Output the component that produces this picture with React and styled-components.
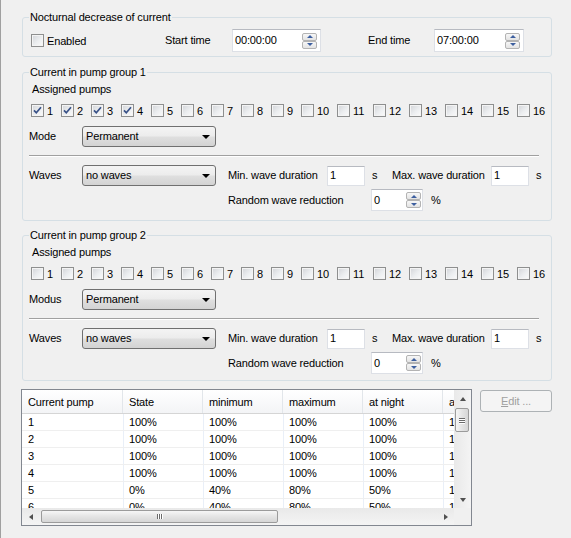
import React from 'react';
import styled, { createGlobalStyle } from 'styled-components';

const GlobalStyle = createGlobalStyle`
  html, body {
    margin: 0;
    padding: 0;
    background: #f0f0f0;
  }
  body {
    font-family: 'Liberation Sans', Arial, sans-serif;
    font-size: 11px;
    color: #000;
  }
`;

const Page = styled.div`
  width: 571px;
  height: 538px;
  box-sizing: border-box;
  border-left: 1px solid #a0a0a0;
  padding: 11px 19px 0 21px;
  background: #f0f0f0;
  letter-spacing: -0.15px;
  overflow: hidden;
`;

const Group = styled.fieldset`
  width: 530px;
  min-width: 0;
  box-sizing: border-box;
  margin: 0 0 ${(p) => p.$mb}px 0;
  padding: ${(p) => p.$pt}px 12px ${(p) => p.$pb}px 6px;
  border: 1px solid #d5dfe5;
  border-radius: 3px;
`;

const Legend = styled.legend`
  padding: 0 1px;
  margin-left: 0;
  line-height: 13px;
  font-size: 11px;
`;

const Row = styled.div`
  display: flex;
  align-items: center;
  height: ${(p) => p.$h}px;
  margin-top: ${(p) => p.$mt || 0}px;
  margin-left: ${(p) => p.$ml || 0}px;
`;

const Label = styled.span`
  flex-shrink: 0;
  width: ${(p) => (p.$w ? `${p.$w}px` : 'auto')};
  margin-left: ${(p) => p.$ml || 0}px;
  white-space: nowrap;
  line-height: 13px;
`;

const Caption = styled.div`
  line-height: 13px;
  margin-left: 3px;
`;

/* checkbox */
const CheckItem = styled.label`
  display: flex;
  align-items: center;
  flex-shrink: 0;
  width: ${(p) => (p.$w ? `${p.$w}px` : 'auto')};
  height: 15px;
  white-space: nowrap;
`;

const Box = styled.span`
  position: relative;
  width: 13px;
  height: 13px;
  box-sizing: border-box;
  border: 1px solid #8e8f8f;
  background: linear-gradient(135deg, #d2d4d8 0%, #eceef0 55%, #fbfbfb 100%);
  box-shadow: inset 0 0 0 1px #f4f4f4;
  margin-right: 3px;
  flex-shrink: 0;

  svg {
    position: absolute;
    left: 0;
    top: 0;
  }
`;

const CheckBox = ({ checked, label, w }) => (
  <CheckItem $w={w}>
    <Box>
      {checked && (
        <svg width="11" height="11" viewBox="0 0 11 11">
          <path d="M2 5.3 L4.3 7.8 L9 2.3" fill="none" stroke="#3a5288" strokeWidth="1.7" />
        </svg>
      )}
    </Box>
    {label}
  </CheckItem>
);

/* inputs */
const TextBox = styled.div`
  display: flex;
  align-items: center;
  flex-shrink: 0;
  box-sizing: border-box;
  width: ${(p) => p.$w}px;
  height: ${(p) => p.$h}px;
  padding: 0 ${(p) => p.$pr || 0}px 0 2px;
  background: #fff;
  border: 1px solid #dde0e6;
  border-top-color: #b7bac1;
  margin-left: ${(p) => p.$ml || 0}px;
`;

const Value = styled.span`
  flex: 1;
  line-height: 13px;
`;

const Spin = styled.div`
  display: flex;
  flex-direction: column;
  width: 15px;
  height: 16px;
  flex-shrink: 0;
`;

const SpinHalf = styled.div`
  flex: 1;
  display: flex;
  align-items: center;
  justify-content: center;
  box-sizing: border-box;
  border: 1px solid #b3b3b3;
  border-radius: 2px;
  background: linear-gradient(#f7f7f7, #e3e3e3);
`;

const Tri = styled.span`
  width: 0;
  height: 0;
  border-left: 3px solid transparent;
  border-right: 3px solid transparent;
  ${(p) =>
    p.$dir === 'up'
      ? 'border-bottom: 3px solid #3d5f9f;'
      : 'border-top: 3px solid #3d5f9f;'}
`;

const Spinner = () => (
  <Spin>
    <SpinHalf>
      <Tri $dir="up" />
    </SpinHalf>
    <SpinHalf>
      <Tri $dir="down" />
    </SpinHalf>
  </Spin>
);

const Combo = styled.div`
  display: flex;
  align-items: center;
  flex-shrink: 0;
  box-sizing: border-box;
  width: 134px;
  height: 21px;
  padding: 0 5px 0 3px;
  border: 1px solid #707070;
  border-radius: 3px;
  background: linear-gradient(#f4f4f4 0%, #ececec 48%, #dfdfdf 52%, #d3d3d3 100%);
`;

const Arrow = styled.span`
  width: 0;
  height: 0;
  border-left: 4px solid transparent;
  border-right: 4px solid transparent;
  border-top: 4px solid #000;
  margin-top: 1px;
`;

const Select = ({ value }) => (
  <Combo>
    <Value>{value}</Value>
    <Arrow />
  </Combo>
);

const Separator = styled.div`
  height: 0;
  margin-top: 8px;
  border-top: 1px solid #a0a0a0;
  border-bottom: 1px solid #fff;
`;

const WaveArea = styled.div`
  display: flex;
  align-items: flex-start;
  margin-top: 8px;
`;

const WaveLeft = styled.div`
  display: flex;
  align-items: center;
  height: 21px;
`;

const WaveRight = styled.div`
  display: flex;
  flex-direction: column;
  margin-left: 12px;
`;

/* grid */
const Bottom = styled.div`
  display: flex;
  align-items: flex-start;
`;

const Grid = styled.div`
  display: flex;
  flex-direction: column;
  width: 451px;
  height: 137px;
  box-sizing: border-box;
  margin-left: -1px;
  border: 1px solid #828790;
  background: #fff;
`;

const GridBody = styled.div`
  display: flex;
  height: 118px;
`;

const Cells = styled.div`
  flex: 1;
  overflow: hidden;
`;

const HeadRow = styled.div`
  display: flex;
  height: 23px;
  border-bottom: 1px solid #d5d5d5;
  background: linear-gradient(#ffffff, #f3f4f6);
`;

const HeadCell = styled.div`
  flex-shrink: 0;
  box-sizing: border-box;
  width: ${(p) => p.$w}px;
  padding: 2px 0 0 6px;
  line-height: 21px;
  border-right: 1px solid #e2e6ea;
  white-space: nowrap;
  overflow: hidden;
`;

const DataRow = styled.div`
  display: flex;
  height: 16px;
  border-bottom: 1px solid #efefef;
`;

const DataCell = styled.div`
  flex-shrink: 0;
  box-sizing: border-box;
  width: ${(p) => p.$w}px;
  padding: 1px 0 0 ${(p) => (p.$first ? 6 : 5)}px;
  line-height: 15px;
  border-left: ${(p) => (p.$first ? 'none' : '1px solid #e9eff8')};
  white-space: nowrap;
  overflow: hidden;
`;

const VScroll = styled.div`
  display: flex;
  flex-direction: column;
  width: 17px;
  background: linear-gradient(to right, #e9e9e9, #f4f4f4);
`;

const HScrollRow = styled.div`
  display: flex;
  height: 17px;
`;

const HScroll = styled.div`
  flex: 1;
  display: flex;
  align-items: center;
  background: linear-gradient(#e9e9e9, #f4f4f4);
`;

const Corner = styled.div`
  width: 17px;
  background: #f0f0f0;
`;

const ScrollBtn = styled.div`
  flex-shrink: 0;
  width: 17px;
  height: 17px;
  display: flex;
  align-items: center;
  justify-content: center;
`;

const ScrollTri = styled.span`
  width: 0;
  height: 0;
  ${(p) =>
    ({
      up: 'border-left:3.5px solid transparent;border-right:3.5px solid transparent;border-bottom:4px solid #505050;',
      down: 'border-left:3.5px solid transparent;border-right:3.5px solid transparent;border-top:4px solid #505050;',
      left: 'border-top:3.5px solid transparent;border-bottom:3.5px solid transparent;border-right:4px solid #505050;',
      right: 'border-top:3.5px solid transparent;border-bottom:3.5px solid transparent;border-left:4px solid #505050;',
    })[p.$dir]}
`;

const VThumb = styled.div`
  display: flex;
  flex-direction: column;
  align-items: center;
  justify-content: center;
  gap: 1px;
  width: 14px;
  height: 24px;
  margin: 1px 0 0 1px;
  box-sizing: border-box;
  border: 1px solid #9b9b9b;
  border-radius: 2px;
  background: linear-gradient(to right, #f6f6f6, #e4e4e4 50%, #d6d6d6);
`;

const HThumb = styled.div`
  display: flex;
  align-items: center;
  justify-content: center;
  gap: 1px;
  width: 237px;
  height: 13px;
  margin-left: 2px;
  box-sizing: border-box;
  border: 1px solid #9b9b9b;
  border-radius: 2px;
  background: linear-gradient(#f6f6f6, #e4e4e4 50%, #d6d6d6);
`;

const Grip = styled.span`
  background: #6a6a6a;
  width: ${(p) => (p.$v ? '6px' : '1px')};
  height: ${(p) => (p.$v ? '1px' : '5px')};
  box-shadow: ${(p) => (p.$v ? '0 1px 0 #fff' : '1px 0 0 #fff')};
`;

const Spacer = styled.div`
  flex: 1;
`;

const Button = styled.div`
  display: flex;
  align-items: center;
  justify-content: center;
  width: 74px;
  height: 22px;
  box-sizing: border-box;
  margin: 1px 0 0 8px;
  border: 1px solid #adb2b5;
  border-radius: 3px;
  background: #f4f4f4;
  color: #a0a0a0;

  u {
    text-decoration: underline;
  }
`;

const pumps = Array.from({ length: 16 }, (_, i) => i + 1);

const PumpGroup = ({ title, modeLabel, checked, pb }) => (
  <Group $pt={4} $pb={pb} $mb={8}>
    <Legend>{title}</Legend>
    <Caption>Assigned pumps</Caption>
    <Row $h={15} $mt={7} $ml={2}>
      {pumps.map((n) => (
        <CheckBox key={n} label={n} checked={checked.includes(n)} w={n < 10 ? 30 : 36} />
      ))}
    </Row>
    <Row $h={21} $mt={8}>
      <Label $w={53}>{modeLabel}</Label>
      <Select value="Permanent" />
    </Row>
    <Separator />
    <WaveArea>
      <WaveLeft>
        <Label $w={53}>Waves</Label>
        <Select value="no waves" />
      </WaveLeft>
      <WaveRight>
        <Row $h={21}>
          <Label $w={99}>Min. wave duration</Label>
          <TextBox $w={38} $h={20}>
            <Value>1</Value>
          </TextBox>
          <Label $w={20} $ml={7}>s</Label>
          <Label $w={99}>Max. wave duration</Label>
          <TextBox $w={38} $h={20}>
            <Value>1</Value>
          </TextBox>
          <Label $ml={7}>s</Label>
        </Row>
        <Row $h={22} $mt={3}>
          <Label $w={143}>Random wave reduction</Label>
          <TextBox $w={52} $h={22} $pr={1}>
            <Value>0</Value>
            <Spinner />
          </TextBox>
          <Label $ml={8}>%</Label>
        </Row>
      </WaveRight>
    </WaveArea>
  </Group>
);

const columns = [
  { title: 'Current pump', w: 101 },
  { title: 'State', w: 80 },
  { title: 'minimum', w: 80 },
  { title: 'maximum', w: 80 },
  { title: 'at night', w: 80 },
  { title: 'at day', w: 80 },
];

const rows = [
  ['1', '100%', '100%', '100%', '100%', '100%'],
  ['2', '100%', '100%', '100%', '100%', '100%'],
  ['3', '100%', '100%', '100%', '100%', '100%'],
  ['4', '100%', '100%', '100%', '100%', '100%'],
  ['5', '0%', '40%', '80%', '50%', '100%'],
  ['6', '0%', '40%', '80%', '50%', '100%'],
];

export default function App() {
  return (
    <Page>
      <GlobalStyle />
      <Group $pt={5} $pb={4} $mb={9}>
        <Legend>Nocturnal decrease of current</Legend>
        <Row $h={23} $ml={2}>
          <CheckBox label="Enabled" w={134} />
          <Label $w={67}>Start time</Label>
          <TextBox $w={89} $h={23} $pr={3}>
            <Value>00:00:00</Value>
            <Spinner />
          </TextBox>
          <Label $w={66} $ml={47}>End time</Label>
          <TextBox $w={90} $h={23} $pr={3}>
            <Value>07:00:00</Value>
            <Spinner />
          </TextBox>
        </Row>
      </Group>

      <PumpGroup title="Current in pump group 1" modeLabel="Mode" checked={[1, 2, 3, 4]} pb={9} />
      <PumpGroup title="Current in pump group 2" modeLabel="Modus" checked={[]} pb={6} />

      <Bottom>
        <Grid>
          <GridBody>
            <Cells>
              <HeadRow>
                {columns.map((c) => (
                  <HeadCell key={c.title} $w={c.w}>
                    {c.title}
                  </HeadCell>
                ))}
              </HeadRow>
              {rows.map((r) => (
                <DataRow key={r[0]}>
                  {r.map((v, i) => (
                    <DataCell key={i} $w={columns[i].w} $first={i === 0}>
                      {v}
                    </DataCell>
                  ))}
                </DataRow>
              ))}
            </Cells>
            <VScroll>
              <ScrollBtn>
                <ScrollTri $dir="up" />
              </ScrollBtn>
              <VThumb>
                <Grip $v />
                <Grip $v />
                <Grip $v />
              </VThumb>
              <Spacer />
              <ScrollBtn>
                <ScrollTri $dir="down" />
              </ScrollBtn>
            </VScroll>
          </GridBody>
          <HScrollRow>
            <HScroll>
              <ScrollBtn>
                <ScrollTri $dir="left" />
              </ScrollBtn>
              <HThumb>
                <Grip />
                <Grip />
                <Grip />
              </HThumb>
              <Spacer />
              <ScrollBtn>
                <ScrollTri $dir="right" />
              </ScrollBtn>
            </HScroll>
            <Corner />
          </HScrollRow>
        </Grid>
        <Button>
          <span>
            <u>E</u>dit ...
          </span>
        </Button>
      </Bottom>
    </Page>
  );
}
